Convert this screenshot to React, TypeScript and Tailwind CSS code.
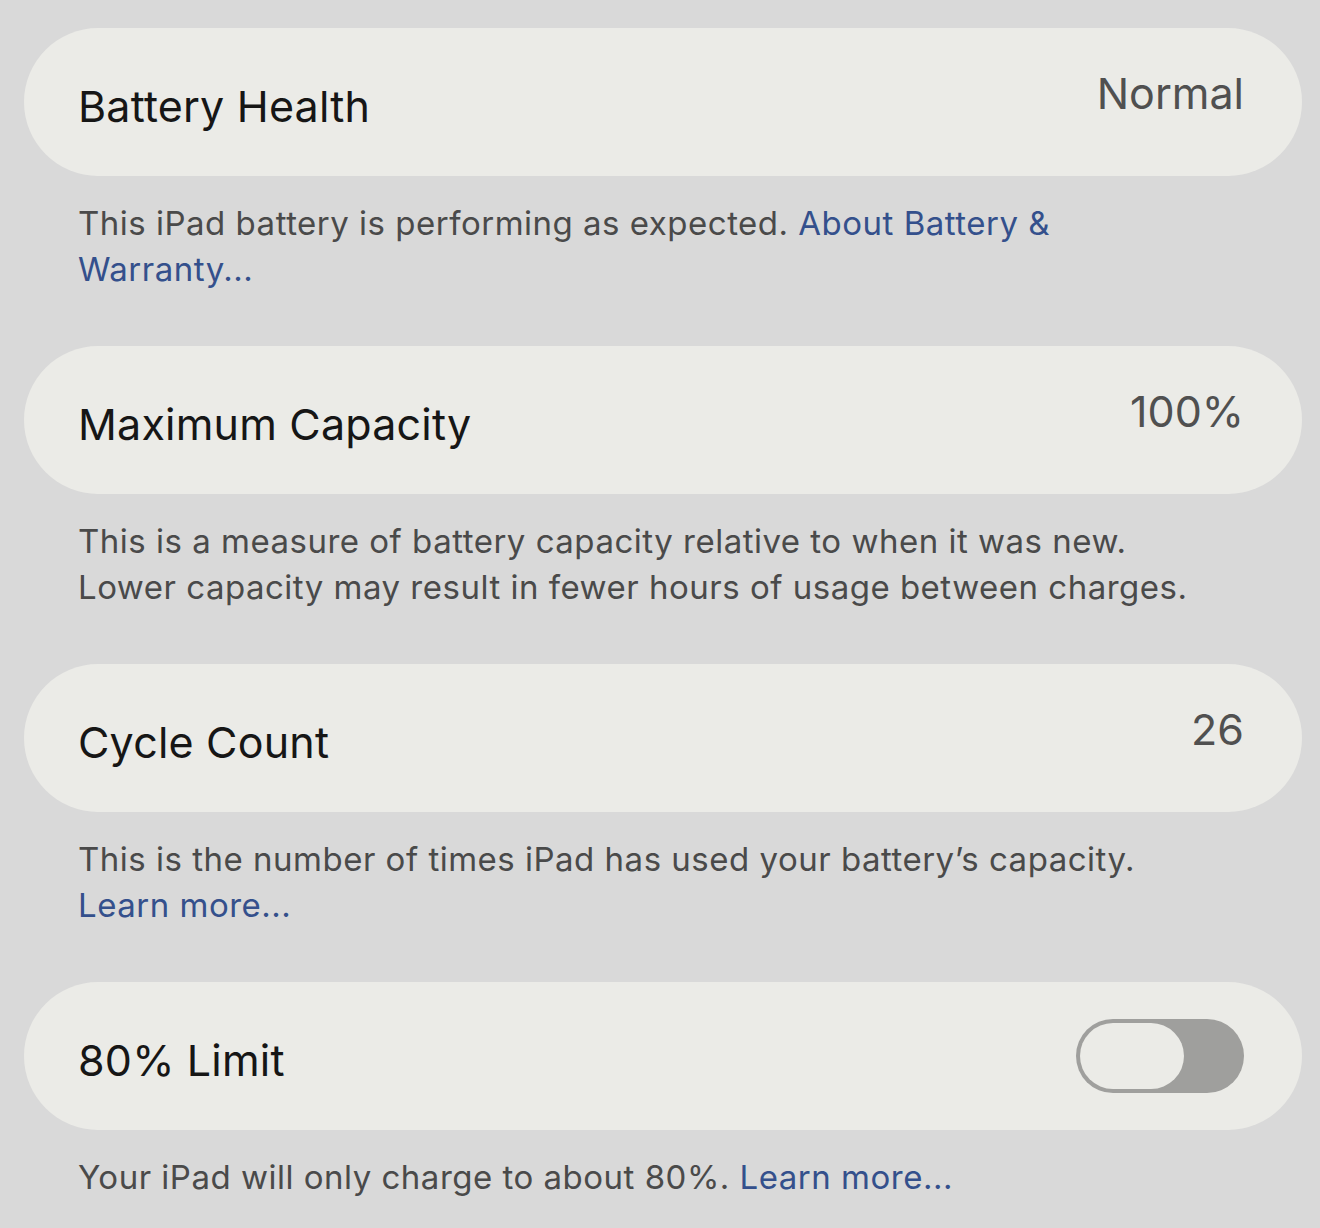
import React from 'react'

type Row = {
  title: string
  value?: string
  toggle?: boolean
  note: React.ReactNode
}

const link = 'text-[#34508c]'

const rows: Row[] = [
  {
    title: 'Battery Health',
    value: 'Normal',
    note: (
      <>
        This iPad battery is performing as expected. <span className={link}>About Battery &amp;</span>
        <br />
        <span className={link}>Warranty...</span>
      </>
    ),
  },
  {
    title: 'Maximum Capacity',
    value: '100%',
    note: (
      <>
        This is a measure of battery capacity relative to when it was new.
        <br />
        Lower capacity may result in fewer hours of usage between charges.
      </>
    ),
  },
  {
    title: 'Cycle Count',
    value: '26',
    note: (
      <>
        This is the number of times iPad has used your battery’s capacity.
        <br />
        <span className={link}>Learn more...</span>
      </>
    ),
  },
  {
    title: '80% Limit',
    toggle: true,
    note: (
      <>
        Your iPad will only charge to about 80%. <span className={link}>Learn more...</span>
      </>
    ),
  },
]

function Toggle() {
  return (
    <div className="w-[168px] h-[74px] rounded-full bg-[#9f9f9d] p-[4px] flex items-center">
      <div className="w-[104px] h-full rounded-full bg-[#ebebe7]" />
    </div>
  )
}

export default function App() {
  return (
    <div
      className="w-[1320px] h-[1228px] overflow-hidden bg-[#d9d9d9] pt-[28px] pl-[24px] pr-[18px]"
      style={{ fontFamily: 'Inter, "Noto Sans", sans-serif' }}
    >
      {rows.map((row) => (
        <div key={row.title}>
          <div className="h-[148px] rounded-[74px] bg-[#ebebe7] flex items-center justify-between pl-[54px] pr-[58px]">
            <span className="text-[43px] text-[#161616] tracking-[0.2px] pt-[8px]">{row.title}</span>
            {row.toggle ? (
              <Toggle />
            ) : (
              <span className="text-[43px] text-[#505050] -mt-[18px]">{row.value}</span>
            )}
          </div>
          <div className="h-[170px] pt-[24px] pl-[54px] text-[33px] leading-[46px] tracking-[0.5px] text-[#4a4a4a]">
            {row.note}
          </div>
        </div>
      ))}
    </div>
  )
}
